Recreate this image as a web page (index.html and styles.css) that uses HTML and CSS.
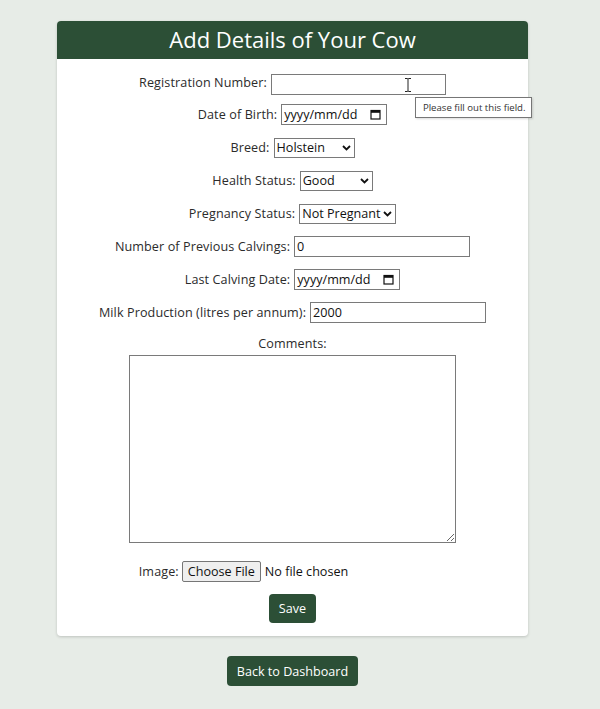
FILE: index.html
```html
<!DOCTYPE html>
<html lang="en">
<head>
<meta charset="utf-8">
<title>Add Details of Your Cow</title>
<link rel="stylesheet" href="styles.css">
</head>
<body>
<div class="page">
  <div class="card">
    <h1 class="card-title">Add Details of Your Cow</h1>
    <form class="form">
      <div class="row reg-row">
        <label class="lbl">Registration Number:</label>
        <span class="field-wrap">
          <input class="text w174" type="text">
          <svg class="ibeam" width="8" height="14" viewBox="0 0 8 14"><path d="M1 0.5h2.5l0.5 0.6 0.5-0.6h2.5M4 1v12M1 13.5h2.5l0.5-0.6 0.5 0.6h2.5" fill="none" stroke="#222" stroke-width="1"/></svg>
          <span class="tooltip">Please fill out this field.</span>
        </span>
      </div>
      <div class="row">
        <label class="lbl">Date of Birth:</label>
        <span class="date"><span class="date-text">yyyy/mm/dd</span><svg class="cal" width="11" height="11" viewBox="0 0 11 11"><rect x="1" y="1.5" width="9" height="8.5" fill="none" stroke="#111" stroke-width="1.2"/><rect x="1" y="1.5" width="9" height="2.3" fill="#111"/></svg></span>
      </div>
      <div class="row">
        <label class="lbl">Breed:</label>
        <span class="sel-wrap w81"><select class="sel"><option>Holstein</option></select><svg class="chev" width="9" height="6" viewBox="0 0 9 6"><path d="M1 1l3.5 3.5L8 1" fill="none" stroke="#111" stroke-width="1.8"/></svg></span>
      </div>
      <div class="row">
        <label class="lbl">Health Status:</label>
        <span class="sel-wrap w73"><select class="sel"><option>Good</option></select><svg class="chev" width="9" height="6" viewBox="0 0 9 6"><path d="M1 1l3.5 3.5L8 1" fill="none" stroke="#111" stroke-width="1.8"/></svg></span>
      </div>
      <div class="row">
        <label class="lbl">Pregnancy Status:</label>
        <span class="sel-wrap w97"><select class="sel"><option>Not Pregnant</option></select><svg class="chev" width="9" height="6" viewBox="0 0 9 6"><path d="M1 1l3.5 3.5L8 1" fill="none" stroke="#111" stroke-width="1.8"/></svg></span>
      </div>
      <div class="row">
        <label class="lbl">Number of Previous Calvings:</label>
        <input class="text w175" type="text" value="0">
      </div>
      <div class="row">
        <label class="lbl">Last Calving Date:</label>
        <span class="date"><span class="date-text">yyyy/mm/dd</span><svg class="cal" width="11" height="11" viewBox="0 0 11 11"><rect x="1" y="1.5" width="9" height="8.5" fill="none" stroke="#111" stroke-width="1.2"/><rect x="1" y="1.5" width="9" height="2.3" fill="#111"/></svg></span>
      </div>
      <div class="row">
        <label class="lbl">Milk Production (litres per annum):</label>
        <input class="text w175" type="text" value="2000">
      </div>
      <div class="comments">
        <label class="lbl">Comments:</label>
        <textarea class="area"></textarea>
      </div>
      <div class="row image-row">
        <label class="lbl">Image:</label>
        <span class="file"><span class="file-btn">Choose File</span><span class="file-name">No file chosen</span></span>
      </div>
      <div class="save-row">
        <button class="btn" type="button">Save</button>
      </div>
    </form>
  </div>
  <div class="back-row">
    <button class="btn btn-back" type="button">Back to Dashboard</button>
  </div>
</div>
</body>
</html>
```

FILE: styles.css
```css
* { box-sizing: border-box; }
html, body {
  margin: 0;
  padding: 0;
  background: #e7ece7;
  font-family: "Open Sans", "DejaVu Sans", sans-serif;
  color: #222;
}
.page {
  width: 585px;
  padding-top: 21px;
}
.card {
  width: 471px;
  margin: 0 auto;
  background: #fff;
  border-radius: 4px;
  box-shadow: 0 1px 3px rgba(0,0,0,0.18);
}
.card-title {
  margin: 0;
  height: 38px;
  line-height: 37px;
  background: #2c4f36;
  color: #fff;
  text-align: center;
  font-size: 22px;
  font-weight: 400;
  border-radius: 4px 4px 0 0;
}
.form {
  padding: 13px 0 13px;
  display: flex;
  flex-direction: column;
  align-items: center;
}
.row {
  display: flex;
  align-items: center;
  justify-content: center;
  gap: 4px;
  height: 21px;
  margin-bottom: 12px;
}
.reg-row { margin-bottom: 11px; }
.lbl {
  font-size: 12.6px;
  color: #2b2b2b;
  letter-spacing: 0.1px;
}
.text {
  height: 21px;
  border: 1px solid #7a7a7a;
  border-radius: 0;
  padding: 1px 2px;
  font-family: inherit;
  font-size: 12.6px;
  color: #111;
  background: #fff;
  outline: none;
}
.w174 { width: 175px; }
.w175 { width: 176px; }
.field-wrap {
  position: relative;
  display: inline-block;
  height: 21px;
}
.ibeam {
  position: absolute;
  left: 133px;
  top: 6px;
}
.tooltip {
  position: absolute;
  left: 144px;
  top: 25px;
  width: 117px;
  height: 21px;
  border: 1px solid #767676;
  background: #fff;
  font-size: 9.6px;
  line-height: 19px;
  padding-left: 7px;
  color: #333;
  white-space: nowrap;
  box-shadow: 1px 1px 2px rgba(0,0,0,0.15);
}
.date {
  display: inline-flex;
  align-items: center;
  justify-content: space-between;
  width: 106px;
  height: 21px;
  border: 1px solid #7a7a7a;
  padding: 0 5px 0 2px;
  background: #fff;
}
.date-text {
  font-size: 12.6px;
  color: #111;
}
.cal { display: block; }
.sel-wrap {
  position: relative;
  display: inline-block;
  height: 20px;
}
.sel {
  appearance: none;
  -webkit-appearance: none;
  display: block;
  width: 100%;
  height: 20px;
  border: 1px solid #7a7a7a;
  border-radius: 0;
  font-family: inherit;
  font-size: 12.6px;
  color: #111;
  background: #fff;
  padding: 0 0 0 2px;
  outline: none;
}
.chev {
  position: absolute;
  right: 4px;
  top: 7px;
  pointer-events: none;
}
.w81 { width: 81px; }
.w73 { width: 73px; }
.w97 { width: 97px; }
.comments {
  display: flex;
  flex-direction: column;
  align-items: center;
}
.comments .lbl {
  line-height: 18px;
  margin-bottom: 2px;
}
.area {
  display: block;
  width: 327px;
  height: 188px;
  border: 1px solid #7a7a7a;
  border-radius: 0;
  margin: 0 0 18px;
  padding: 2px;
  font-family: inherit;
}
.image-row {
  margin-left: -98px;
  gap: 3px;
}
.file {
  display: inline-flex;
  align-items: center;
  gap: 4px;
}
.file-btn {
  display: inline-block;
  height: 21px;
  line-height: 19px;
  padding: 0 5px;
  border: 1px solid #767676;
  border-radius: 2px;
  background: #efefef;
  font-size: 12.6px;
  color: #111;
}
.file-name {
  font-size: 12.6px;
  color: #111;
}
.save-row {
  display: flex;
  justify-content: center;
}
.btn {
  height: 29px;
  padding: 0 10px;
  border: none;
  border-radius: 4px;
  background: #2c4f36;
  color: #fff;
  font-family: inherit;
  font-size: 12.6px;
  cursor: pointer;
}
.back-row {
  display: flex;
  justify-content: center;
  padding-top: 20px;
}
.btn-back {
  height: 30px;
  width: 131px;
  padding: 0;
}
```
